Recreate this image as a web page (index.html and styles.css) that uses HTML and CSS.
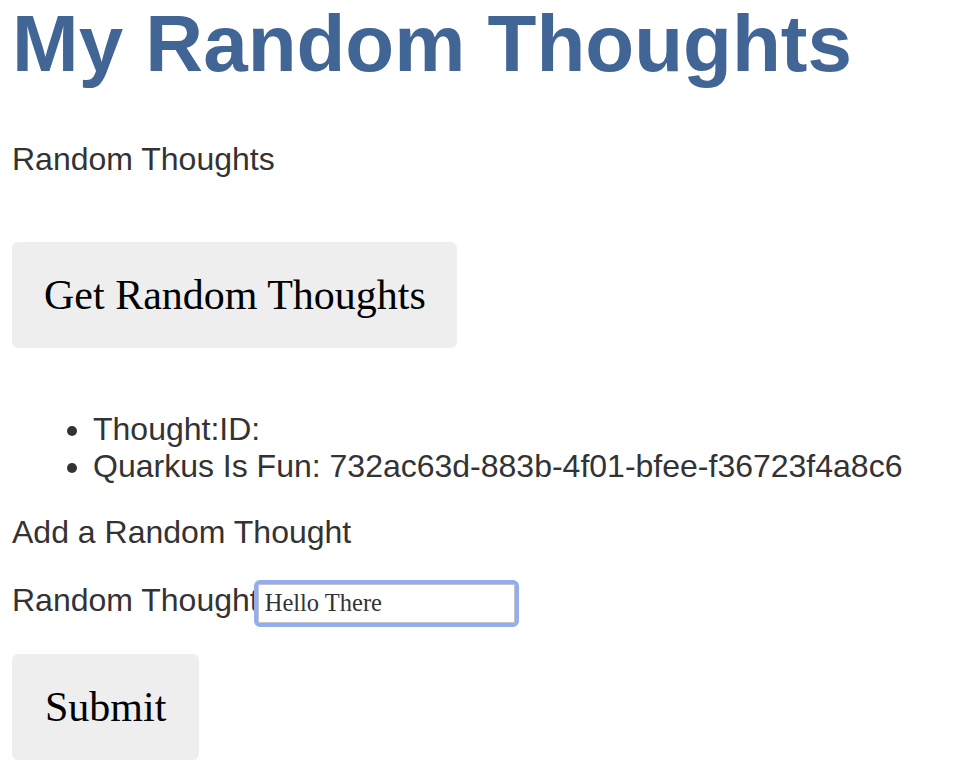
FILE: index.html
```html
<!DOCTYPE html>
<html lang="en">
<head>
<meta charset="utf-8">
<title>My Random Thoughts</title>
<link rel="stylesheet" href="styles.css">
</head>
<body>
<main class="page">
  <h1 class="title">My Random Thoughts</h1>
  <p class="section">Random Thoughts</p>
  <button class="btn btn-get" type="button">Get Random Thoughts</button>
  <ul class="thoughts">
    <li>Thought:ID:</li>
    <li>Quarkus Is Fun: 732ac63d-883b-4f01-bfee-f36723f4a8c6</li>
  </ul>
  <p class="section section-add">Add a Random Thought</p>
  <form class="add-form">
    <div class="field"><label class="field-label" for="thought">Random Thought</label><input class="field-input" id="thought" type="text" value="Hello There"></div>
    <button class="btn btn-submit" type="submit">Submit</button>
  </form>
</main>
</body>
</html>
```
FILE: styles.css
```css
html, body {
  margin: 0;
  padding: 0;
  background: #ffffff;
}

body {
  padding: 0 12px;
  font-family: "Liberation Sans", Arial, sans-serif;
  font-size: 32px;
  color: #333333;
}

.page {
  display: flex;
  flex-direction: column;
  align-items: flex-start;
}

.title {
  margin: 0;
  font-size: 80px;
  line-height: 88px;
  font-weight: bold;
  color: #416594;
  white-space: nowrap;
}

.section {
  margin: 53px 0 0 0;
  line-height: 37px;
}

.section-add {
  margin-top: 29px;
}

.btn {
  font-family: Georgia, "Liberation Serif", serif;
  font-size: 42px;
  line-height: 46px;
  color: #000000;
  background: #eeeeee;
  border: none;
  border-radius: 6px;
  padding: 30px 31px 30px 32px;
  margin: 0;
}

.btn-get {
  margin-top: 64px;
}

.thoughts {
  margin: 63px 0 0 0;
  padding-left: 81px;
  line-height: 37px;
}

.add-form {
  display: flex;
  flex-direction: column;
  align-items: flex-start;
  margin-top: 31px;
}

.field {
  line-height: 37px;
  white-space: nowrap;
}

.field-input {
  box-sizing: border-box;
  width: 257px;
  height: 39px;
  margin: 0 0 0 -1px;
  padding: 3px 6px;
  font-family: Georgia, "Liberation Serif", serif;
  font-size: 24.5px;
  color: #333333;
  border: 1px solid #c4c4c4;
  border-radius: 2px;
  outline: 4px solid #90aef0;
  outline-offset: 0;
  vertical-align: baseline;
}

.btn-submit {
  margin-top: 31px;
  padding: 30px 33px 30px 33px;
}
```
